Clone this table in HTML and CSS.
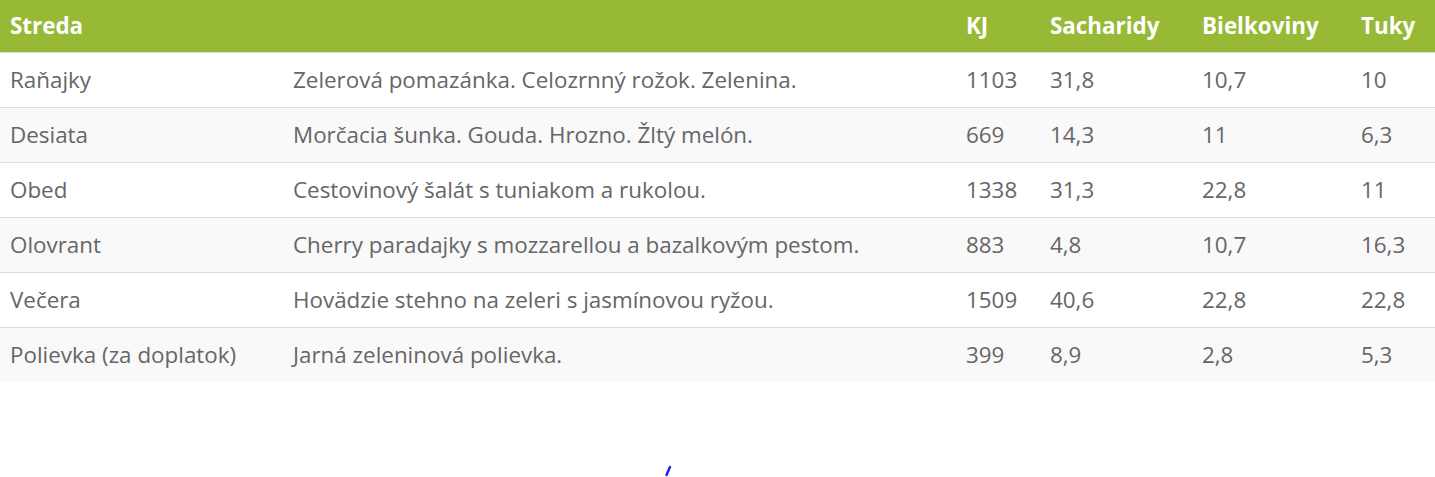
FILE: index.html
```html
<!DOCTYPE html>
<html lang="sk">
<head>
<meta charset="utf-8">
<title>Streda</title>
<link rel="stylesheet" href="styles.css">
</head>
<body>
<table class="menu">
  <colgroup>
    <col class="c-meal">
    <col class="c-desc">
    <col class="c-kj">
    <col class="c-sach">
    <col class="c-biel">
    <col class="c-tuky">
  </colgroup>
  <thead>
    <tr>
      <th>Streda</th>
      <th></th>
      <th>KJ</th>
      <th>Sacharidy</th>
      <th>Bielkoviny</th>
      <th>Tuky</th>
    </tr>
  </thead>
  <tbody>
    <tr><td>Raňajky</td><td>Zelerová pomazánka. Celozrnný rožok. Zelenina.</td><td>1103</td><td>31,8</td><td>10,7</td><td>10</td></tr>
    <tr><td>Desiata</td><td>Morčacia šunka. Gouda. Hrozno. Žltý melón.</td><td>669</td><td>14,3</td><td>11</td><td>6,3</td></tr>
    <tr><td>Obed</td><td>Cestovinový šalát s tuniakom a rukolou.</td><td>1338</td><td>31,3</td><td>22,8</td><td>11</td></tr>
    <tr><td>Olovrant</td><td>Cherry paradajky s mozzarellou a bazalkovým pestom.</td><td>883</td><td>4,8</td><td>10,7</td><td>16,3</td></tr>
    <tr><td>Večera</td><td>Hovädzie stehno na zeleri s jasmínovou ryžou.</td><td>1509</td><td>40,6</td><td>22,8</td><td>22,8</td></tr>
    <tr><td>Polievka (za doplatok)</td><td>Jarná zeleninová polievka.</td><td>399</td><td>8,9</td><td>2,8</td><td>5,3</td></tr>
  </tbody>
</table>
<svg class="stray" width="8" height="12" viewBox="0 0 8 12"><path d="M6 2 L2.5 10" stroke="#1a1aff" stroke-width="2.4" stroke-linecap="round"/></svg>
</body>
</html>
```
FILE: styles.css
```css
html, body {
  margin: 0;
  padding: 0;
  background: #fff;
}
body {
  font-family: "Open Sans", "Liberation Sans", sans-serif;
  position: relative;
  min-height: 477px;
}
.menu {
  width: 100%;
  border-collapse: collapse;
  table-layout: fixed;
  font-size: 22.4px;
  color: #666;
}
.c-meal { width: 283px; }
.c-desc { width: 673px; }
.c-kj { width: 84px; }
.c-sach { width: 152px; }
.c-biel { width: 159px; }
.c-tuky { width: 84px; }
.menu th {
  background: #97b935;
  color: #fff;
  font-weight: 700;
  text-align: left;
  padding: 13px 10px;
  line-height: 26px;
  border-bottom: 1px solid #ddd;
}
.menu td {
  padding: 14px 10px;
  line-height: 26px;
  border-top: 1px solid #ddd;
  white-space: nowrap;
}
.menu tbody tr:first-child td { border-top: 0; }
.menu tbody tr:nth-child(even) td { background: #f9f9f9; }
.stray {
  position: absolute;
  left: 664px;
  top: 465px;
}
```
